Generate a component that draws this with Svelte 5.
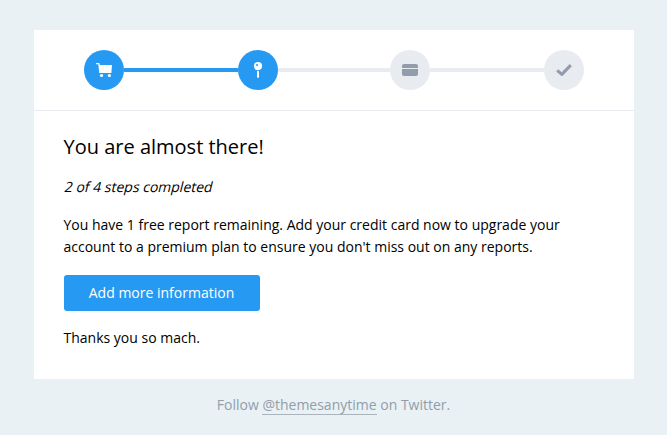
<script>
  const steps = [
    { icon: 'cart', done: true, gap: 0 },
    { icon: 'pin', done: true, gap: 114 },
    { icon: 'card', done: false, gap: 112 },
    { icon: 'check', done: false, gap: 114 }
  ];
</script>

<main>
  <section class="panel">
    <header>
      {#each steps as step}
        {#if step.gap}
          <span class="line" class:done={step.done} style="width: {step.gap}px"></span>
        {/if}
        <span class="step" class:done={step.done}>
          <svg width="16" height="16" viewBox="0 0 16 16" fill="currentColor">
            {#if step.icon === 'cart'}
              <path d="M0 1h3.3l.5 1.9H16l-.6 7.8v.4H3.2L2.3 2.2H0z" />
              <circle cx="5.5" cy="13.5" r="1.6" />
              <circle cx="13.4" cy="13.5" r="1.6" />
            {:else if step.icon === 'pin'}
              <path fill-rule="evenodd" d="M8 0a4.1 4.1 0 0 1 0 8.2a4.1 4.1 0 0 1 0-8.2zM7 2a1 1 0 1 0 0 2a1 1 0 0 0 0-2z" />
              <path d="M7 9h2v6.2q-1 1-2 0z" />
            {:else if step.icon === 'card'}
              <path d="M0 6V4q0-2 2-2h12q2 0 2 2v2zM0 7h16v5q0 2-2 2H2q-2 0-2-2z" />
            {:else}
              <path d="M1.2 8.3l4.6 4.1 9-9.2" fill="none" stroke="currentColor" stroke-width="3.1" stroke-linejoin="round" />
            {/if}
          </svg>
        </span>
      {/each}
    </header>
    <div class="content">
      <h1>You are almost there!</h1>
      <p class="progress"><em>2 of 4 steps completed</em></p>
      <p>You have 1 free report remaining. Add your credit card now to upgrade your account to a premium plan to ensure you don't miss out on any reports.</p>
      <button type="button">Add more information</button>
      <p class="thanks">Thanks you so mach.</p>
    </div>
  </section>
  <footer>Follow <a href="#twitter">@themesanytime</a> on Twitter.</footer>
</main>

<style>
  :global(body) {
    margin: 0;
    background: #e9f1f5;
  }
  main {
    box-sizing: border-box;
    height: 435px;
    padding-top: 30px;
    overflow: hidden;
    font: 14px/22px 'Open Sans', sans-serif;
    color: #000;
    background: #e9f1f5;
  }
  .panel {
    box-sizing: border-box;
    width: 600px;
    height: 349px;
    margin: 0 auto;
    background: #fff;
  }
  header {
    display: flex;
    align-items: center;
    height: 80px;
    padding: 0 50px;
    border-bottom: 1px solid #e8ebf0;
  }
  .step {
    display: flex;
    align-items: center;
    justify-content: center;
    flex: none;
    width: 40px;
    height: 40px;
    border-radius: 50%;
    background: #e8ebf0;
    color: #929dab;
  }
  .step.done {
    background: #2699f2;
    color: #fff;
  }
  .line {
    flex: none;
    height: 4px;
    background: #e8ebf0;
  }
  .line.done {
    background: #2699f2;
  }
  .content {
    padding: 21px 30px 0;
  }
  h1 {
    margin: 0 0 14px;
    font-size: 20px;
    font-weight: 400;
    line-height: 30px;
  }
  p {
    margin: 0 0 16px;
  }
  em {
    display: inline-block;
    font-style: normal;
    transform: translateX(1px) skewX(-14deg);
  }
  button {
    display: block;
    width: 196px;
    height: 36px;
    margin: 17px 0 16px;
    padding: 0;
    border: 0;
    border-radius: 3px;
    background: #2699f2;
    color: #fff;
    font: inherit;
  }
  footer {
    margin-top: 15px;
    text-align: center;
    color: #929dab;
  }
  a {
    color: inherit;
    text-decoration: none;
    border-bottom: 1px solid #aab4bd;
  }
</style>
